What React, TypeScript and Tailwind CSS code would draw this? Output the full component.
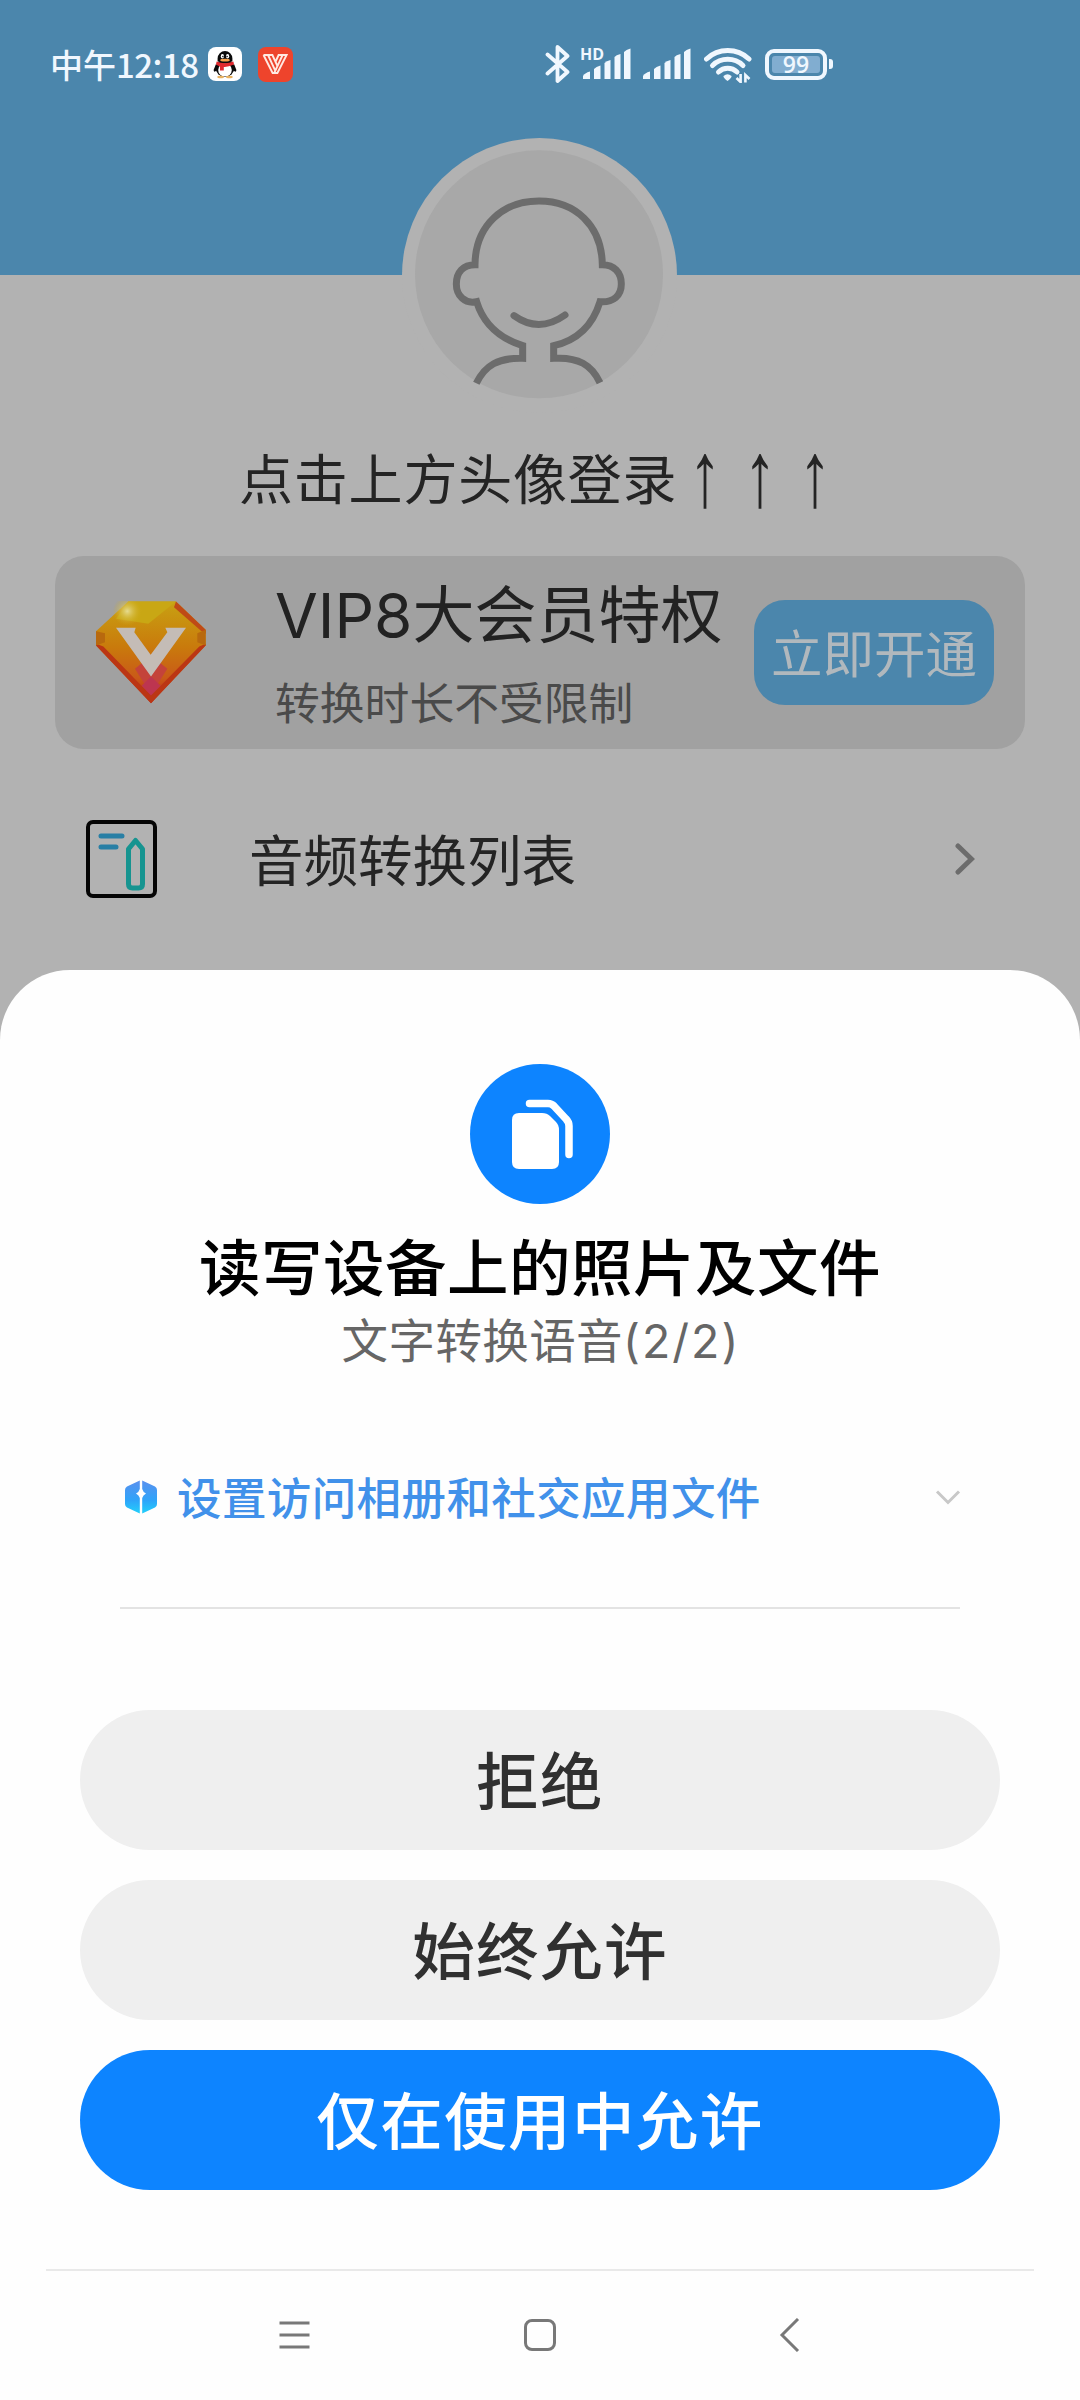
interface SheetButtonProps {
  label: string;
  primary?: boolean;
}

function StatusBar() {
  return (
    <div className="flex h-[128px] items-center pl-[50px] text-[#f0f7fe]">
      <span className="w-[158px] whitespace-nowrap font-['Noto_Sans_CJK_SC',sans-serif] text-[33px] leading-[36px] font-medium">
        中午<span className="tracking-[-0.5px]">12:18</span>
      </span>

      {/* Notification icons */}
      <svg className="h-[34px] w-[34px]" viewBox="0 0 34 34">
        <rect width="34" height="34" rx="8" fill="#fff" />
        <path d="M8 17 L5.6 23 Q6 26 8.5 23.5 Z M26 17 L28.4 23 Q28 26 25.5 23.5 Z" fill="#0a0a0a" />
        <ellipse cx="17" cy="21" rx="9.4" ry="9" fill="#0a0a0a" />
        <ellipse cx="17" cy="23" rx="6.8" ry="6.6" fill="#fff" />
        <path d="M9.6 14.5 V11.5 A7.4 7.6 0 0 1 24.4 11.5 V14.5 Z" fill="#0a0a0a" />
        <ellipse cx="14.4" cy="9.3" rx="1.6" ry="2.2" fill="#fff" />
        <ellipse cx="19.6" cy="9.3" rx="1.6" ry="2.2" fill="#fff" />
        <circle cx="14.9" cy="9.5" r="0.8" fill="#111" />
        <circle cx="19.1" cy="9.5" r="0.8" fill="#111" />
        <ellipse cx="17" cy="13.2" rx="4.8" ry="1.4" fill="#f5a04a" />
        <path d="M8.6 14.4 Q17 18 25.4 14.4 L26 17.6 Q20 20.3 15.8 20 V23.4 H12 V19.4 Q9.5 18.8 8 17.6 Z" fill="#e0282e" />
        <ellipse cx="12.6" cy="30" rx="3.4" ry="1.3" fill="#e9b25f" />
        <ellipse cx="21.4" cy="30" rx="3.4" ry="1.3" fill="#e9b25f" />
      </svg>
      <svg className="ml-[16px] h-[35px] w-[35px]" viewBox="0 0 35 35">
        <rect width="35" height="35" rx="8" fill="#ee442c" />
        <path
          d="M5.5 8 L14.6 26 H19.4 L28.6 8 H20.6 L17.4 15 M5.5 8 H14.4 L19.6 19.4 M10 8 L17.6 24.4 M24.6 8 L16.4 25.6"
          fill="none"
          stroke="#ffe9e2"
          strokeWidth="1.9"
        />
      </svg>

      {/* Connectivity icons */}
      <svg className="ml-[252px] h-[40px] w-[26px]" viewBox="0 0 26 40">
        <path
          d="M2.5 10.5 L22.5 28 L12.5 37 V3 L22.5 12 L2.5 29.5"
          fill="none"
          stroke="currentColor"
          strokeWidth="3.8"
          strokeLinecap="round"
          strokeLinejoin="round"
        />
      </svg>
      <div className="relative ml-[12px] h-[32px] w-[48px]">
        <span className="absolute -top-[2px] -left-[3px] font-['Open_Sans',sans-serif] text-[16px] leading-[16px] font-bold">
          HD
        </span>
        <SignalBars />
      </div>
      <div className="ml-[12px] h-[32px] w-[48px]">
        <SignalBars />
      </div>
      <svg className="ml-[13px] h-[37px] w-[48px]" viewBox="0 0 48 37">
        <g fill="none" stroke="currentColor" strokeWidth="5">
          <path d="M2.5 13 A31 31 0 0 1 45 13" strokeLinecap="round" />
          <path d="M8.5 19.5 A22 22 0 0 1 39 19.5" strokeLinecap="round" />
          <path d="M14.5 26 A13.6 13.6 0 0 1 33 26" strokeLinecap="round" />
        </g>
        <path d="M19.5 30 Q23.5 26.5 27.5 30 Q28 31.5 23.5 35 Q19 31.5 19.5 30 Z" fill="currentColor" />
        <path d="M37 28 V36 L31.5 31.5 M40.5 37 V29 L46 33.5" fill="none" stroke="#4b86ac" strokeWidth="5" />
        <path d="M36.6 28 V36 L32.5 32 M41.4 36.5 V29 L45.5 33" fill="none" stroke="currentColor" strokeWidth="2.6" />
      </svg>
      <div className="ml-[13px] flex h-[31px] w-[62px] items-center rounded-[9px] border-4 border-current p-[3px]">
        <div className="flex h-full w-full items-center justify-center rounded-[3px] bg-[#81add0] font-['Open_Sans',sans-serif] text-[23px] leading-[20px] font-semibold">
          99
        </div>
      </div>
      <div className="ml-[2px] h-[10px] w-[4px] rounded-r-[3px] bg-current" />
    </div>
  );
}

function SignalBars() {
  return (
    <svg className="h-[32px] w-[48px]" viewBox="0 0 48 32" fill="currentColor">
      <path d="M0 31 V28 Q1.5 25 7 23.5 V31 Z" />
      <path d="M11 31 V21 Q13 18.5 17.5 17.5 V31 Z" />
      <path d="M21.5 31 V15 Q23.5 13 27.5 12 V31 Z" />
      <path d="M31.5 31 V9 Q33 7 37.5 6 V31 Z" />
      <path d="M41 31 V4 Q43 1.5 47.5 0.5 V31 Z" />
    </svg>
  );
}

function Avatar() {
  return (
    <div className="-mt-[137px] ml-[402px] h-[275px] w-[275px] rounded-full bg-[#b2b2b2] pt-[12px] pl-[13px]">
      <svg className="h-[249px] w-[249px]" viewBox="105 90 747 747">
        <circle cx="477" cy="463" r="372" fill="#a8a8a8" />
        <g fill="none" stroke="#6c6c6c" strokeWidth="21">
          <path d="M289 790 C315 735 355 713 428 715 V677 C360 655 310 610 290 545 C255 553 229 527 229 492 C229 457 250 434 285 434 C286 315 370 243 477 243 C585 243 665 315 667 434 C702 434 724 457 724 492 C724 527 700 548 660 545 C640 610 595 660 521 677 V715 C595 710 635 735 660 788" />
          <path d="M402 587 Q477 641 555 585" strokeLinecap="round" />
        </g>
      </svg>
    </div>
  );
}

function VipGem() {
  return (
    <svg className="h-[103px] w-[110px]" viewBox="168 183 330 306">
      <defs>
        <linearGradient id="gem" x1="0" y1="0" x2="0" y2="1">
          <stop offset="0" stopColor="#c8a112" />
          <stop offset="0.45" stopColor="#c97a0c" />
          <stop offset="0.75" stopColor="#c95a18" />
          <stop offset="1" stopColor="#b92518" />
        </linearGradient>
        <radialGradient id="shine">
          <stop offset="0" stopColor="#e6dc90" />
          <stop offset="1" stopColor="#d0aa18" stopOpacity="0" />
        </radialGradient>
      </defs>
      <path d="M265 183 H408 L497 268 V315 L333 488 L168 315 V272 Z" fill="url(#gem)" />
      <path d="M265 183 H408 L325 250 L228 235 Z" fill="#c9a714" />
      <path d="M408 183 L497 268 V280 L482 270 L402 200 Z" fill="#bf4a16" />
      <path d="M168 310 L190 318 L333 465 L478 318 L497 310 V315 L333 488 L168 315 Z" fill="#bb3614" />
      <path d="M168 272 L195 278 V305 L168 315 Z M497 268 L472 278 V305 L497 315 Z" fill="#b8690e" />
      <path d="M285 385 L333 345 L382 385 L333 462 Z" fill="#c4433a" />
      <path d="M333 408 L305 436 L333 465 L362 436 Z" fill="#bd3550" />
      <circle cx="262" cy="212" r="44" fill="url(#shine)" />
      <path d="M228 262 H287 L283 275 L332 343 L382 275 L376 262 H438 L333 408 Z" fill="#c4bcb6" />
    </svg>
  );
}

function SheetButton({ label, primary }: SheetButtonProps) {
  return (
    <button
      className={
        primary
          ? "h-[140px] w-full rounded-full bg-[#0d84ff] pt-[5px] text-[62.5px] tracking-[1.4px] font-medium text-white"
          : "h-[140px] w-full rounded-full bg-[#efefef] pt-[5px] text-[62.5px] tracking-[1.4px] font-medium text-[#303030]"
      }
    >
      {label}
    </button>
  );
}

function PermissionSheet() {
  return (
    <div className="flex h-[1430px] flex-col items-center rounded-t-[70px] bg-[#fefefe] pt-[94px]">
      <svg className="h-[140px] w-[140px]" viewBox="0 0 140 140">
        <circle cx="70" cy="70" r="70" fill="#0d84ff" />
        <path d="M49 49 H72 Q77 49 80 52 L86 58 Q89 61 89 66 V98 Q89 105 82 105 H49 Q42 105 42 98 V56 Q42 49 49 49 Z" fill="#fff" />
        <path
          d="M59.5 39.5 H78 Q81.5 39.5 84 42 L96 55 Q99 58 99 62 V90.5"
          fill="none"
          stroke="#fff"
          strokeWidth="7.5"
          strokeLinecap="round"
        />
      </svg>
      <h1 className="mt-[29px] text-[61.5px] leading-[72px] tracking-[0.5px] font-medium text-black">
        读写设备上的照片及文件
      </h1>
      <p className="mt-[6px] pl-[2px] text-[46.5px] leading-[60px] tracking-[0.4px] text-[#666]">
        文字转换语音<span className="tracking-[2px]">(2/2)</span>
      </p>

      {/* Setting row */}
      <div className="mt-[94px] flex h-[64px] w-[840px] items-center">
        <svg className="ml-[5px] h-[34px] w-[32px]" viewBox="0 0 32 34">
          <defs>
            <linearGradient id="shield" x1="0" y1="0" x2="0" y2="1">
              <stop offset="0" stopColor="#5a90ee" />
              <stop offset="0.6" stopColor="#2ea4fa" />
              <stop offset="1" stopColor="#22d0fb" />
            </linearGradient>
          </defs>
          <path
            d="M14.8 0.5 V9 Q14 12 11 13.5 Q14 15 14.8 18 V33.5 L2 27.5 Q0 26.5 0 24 V10 Q0 7.5 2 6.5 Z M17.2 0.5 V9 Q18 12 21 13.5 Q18 15 17.2 18 V33.5 L30 27.5 Q32 26.5 32 24 V10 Q32 7.5 30 6.5 Z"
            fill="url(#shield)"
          />
        </svg>
        <span className="ml-[20px] pt-[3px] text-[44.5px] leading-[64px] tracking-[0.4px] font-medium text-[#4191ea]">
          设置访问相册和社交应用文件
        </span>
        <svg className="-mr-px ml-auto h-[15px] w-[26px]" viewBox="0 0 26 15">
          <path d="M2 1.5 L13 12.5 L24 1.5" fill="none" stroke="#c8c8c8" strokeWidth="3" />
        </svg>
      </div>
      <div className="mt-[78px] h-[2px] w-[840px] bg-[#e3e3e3]" />

      <div className="mt-[101px] flex w-[920px] flex-col gap-[30px]">
        <SheetButton label="拒绝" />
        <SheetButton label="始终允许" />
        <SheetButton label="仅在使用中允许" primary />
      </div>

      {/* System navigation */}
      <div className="mt-[79px] h-[2px] w-[988px] bg-[#e9e9e9]" />
      <svg className="mt-[47px] h-[34px] w-[522px]" viewBox="0 0 522 34" fill="none" stroke="#787878" strokeWidth="3">
        <path d="M0.5 5 H30.5 M0.5 17 H30.5 M0.5 29 H30.5" />
        <rect x="246.5" y="2.5" width="29" height="29" rx="6.5" />
        <path d="M519 1 L503 17 L519 33" />
      </svg>
    </div>
  );
}

export default function App() {
  return (
    <div className="h-[2400px] w-[1080px] overflow-hidden bg-[#b2b2b2] font-['Inter','Noto_Sans_CJK_SC',sans-serif]">
      <div className="h-[970px]">
        <div className="h-[275px] bg-[#4b86ac]">
          <StatusBar />
        </div>
        <Avatar />

        <div className="mt-[31px] flex h-[70px] items-center pl-[239px] text-[54px] text-[#242424]">
          <span className="pt-[2px] tracking-[0.8px]">点击上方头像登录</span>
          <span className="mb-[8px] ml-[11px] origin-center scale-y-[1.4] font-['Liberation_Serif',serif] text-[66px] leading-[62px] tracking-[22px]">
            ↑↑↑
          </span>
        </div>

        {/* VIP card */}
        <div className="mx-[55px] mt-[42px] flex h-[193px] items-center rounded-[29px] bg-[#a1a1a1] pr-[31px] pl-[41px]">
          <VipGem />
          <div className="ml-[69px] w-[479px] pt-[5px] whitespace-nowrap">
            <div className="text-[62px] leading-[70px] text-[#222]">VIP8大会员特权</div>
            <div className="mt-[27px] text-[44.8px] leading-[52px] text-[#4a4a4a]">转换时长不受限制</div>
          </div>
          <button className="h-[105px] w-[240px] rounded-[31px] bg-[#4b86ac] pt-1 text-[51.5px] text-[#b1b8bd]">
            立即开通
          </button>
        </div>

        {/* Conversion list */}
        <div className="mt-[70px] flex h-[79px] items-center pr-[105px] pl-[86px]">
          <svg className="h-[78px] w-[71px]" viewBox="0 0 71 78" fill="none">
            <rect x="2" y="2" width="67" height="74" rx="5" stroke="#050505" strokeWidth="4" />
            <path d="M15 16 H36 M15 27 H30" stroke="#287fa5" strokeWidth="5" strokeLinecap="round" />
            <path
              d="M42.5 29 L49.5 20.5 L56.5 29 V64 Q56.5 68 52.5 68 H46.5 Q42.5 68 42.5 64 Z"
              stroke="#169490"
              strokeWidth="5"
              strokeLinejoin="round"
            />
          </svg>
          <span className="ml-[92px] pt-[6px] text-[54.5px] text-[#242424]">音频转换列表</span>
          <svg className="ml-auto h-[32px] w-[20px]" viewBox="0 0 20 32">
            <path d="M3 3 L16.5 16 L3 29" fill="none" stroke="#6c6c6c" strokeWidth="5" strokeLinecap="round" />
          </svg>
        </div>
      </div>

      <PermissionSheet />
    </div>
  );
}
